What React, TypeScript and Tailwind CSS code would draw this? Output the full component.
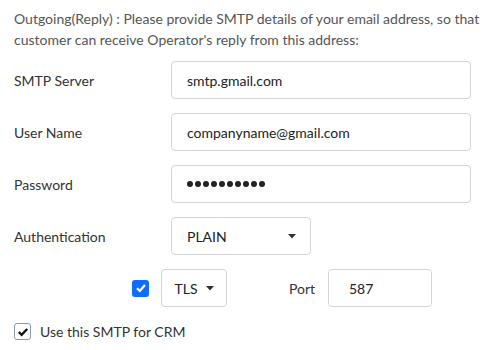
import { useState } from "react";

function Caret() {
  return (
    <svg width="8" height="5" viewBox="0 0 8 5" className="shrink-0">
      <path d="M0 0 L8 0 L4 4.5 Z" fill="#333" />
    </svg>
  );
}

export default function App() {
  const [tls, setTls] = useState(true);
  const [crm, setCrm] = useState(true);

  const label = "w-[157px] shrink-0 text-[14px] text-[#333]";
  const box =
    "h-[38px] rounded-[4px] border border-[#d4d4d4] bg-white flex items-center px-[15px] text-[14px] text-[#222]";

  return (
    <div className="w-[498px] h-[350px] bg-white px-[14px] pt-[8px] overflow-hidden font-['Lato','Noto_Sans',sans-serif]">
      <p className="text-[14px] leading-[21px] text-[#555] mb-[11px]">
        Outgoing(Reply) : Please provide SMTP details of your email address, so
        that customer can receive Operator's reply from this address:
      </p>

      <div className="flex items-center mb-[14px]">
        <div className={label}>SMTP Server</div>
        <div className={box + " w-[300px]"}>smtp.gmail.com</div>
      </div>

      <div className="flex items-center mb-[14px]">
        <div className={label}>User Name</div>
        <div className={box + " w-[300px]"}>companyname@gmail.com</div>
      </div>

      <div className="flex items-center mb-[14px]">
        <div className={label}>Password</div>
        <div className={box + " w-[300px] gap-[2px]"}>
          {Array.from({ length: 10 }).map((_, i) => (
            <span key={i} className="w-[6px] h-[6px] rounded-full bg-[#222]" />
          ))}
        </div>
      </div>

      <div className="flex items-center mb-[14px]">
        <div className={label}>Authentication</div>
        <div className={box + " w-[140px] justify-between pr-[14px]"}>
          <span>PLAIN</span>
          <Caret />
        </div>
      </div>

      <div className="flex items-center mb-[14px]">
        <div className="w-[118px] shrink-0" />
        <button
          onClick={() => setTls(!tls)}
          className={
            "w-[17px] h-[17px] rounded-[3px] flex items-center justify-center shrink-0 " +
            (tls ? "bg-[#0d6efd]" : "border border-[#999] bg-white")
          }
        >
          {tls && (
            <svg width="12" height="12" viewBox="0 0 12 12">
              <path d="M2 6.3 L4.8 9 L10 3" stroke="white" strokeWidth="2.2" fill="none" />
            </svg>
          )}
        </button>
        <div className={box + " w-[66px] ml-[12px] justify-center gap-[8px] px-0"}>
          <span>TLS</span>
          <Caret />
        </div>
        <div className="ml-[62px] w-[39px] text-[14px] text-[#333]">Port</div>
        <div className={box + " w-[104px] pl-[20px]"}>587</div>
      </div>

      <div className="flex items-center">
        <button
          onClick={() => setCrm(!crm)}
          className="w-[17px] h-[17px] rounded-[3px] border border-[#8c9aa6] bg-white flex items-center justify-center shrink-0"
        >
          {crm && (
            <svg width="12" height="12" viewBox="0 0 12 12">
              <path d="M1.8 6 L4.6 8.8 L10.2 3" stroke="#111" strokeWidth="2.4" fill="none" />
            </svg>
          )}
        </button>
        <span className="ml-[9px] text-[14px] text-[#333]">Use this SMTP for CRM</span>
      </div>
    </div>
  );
}
